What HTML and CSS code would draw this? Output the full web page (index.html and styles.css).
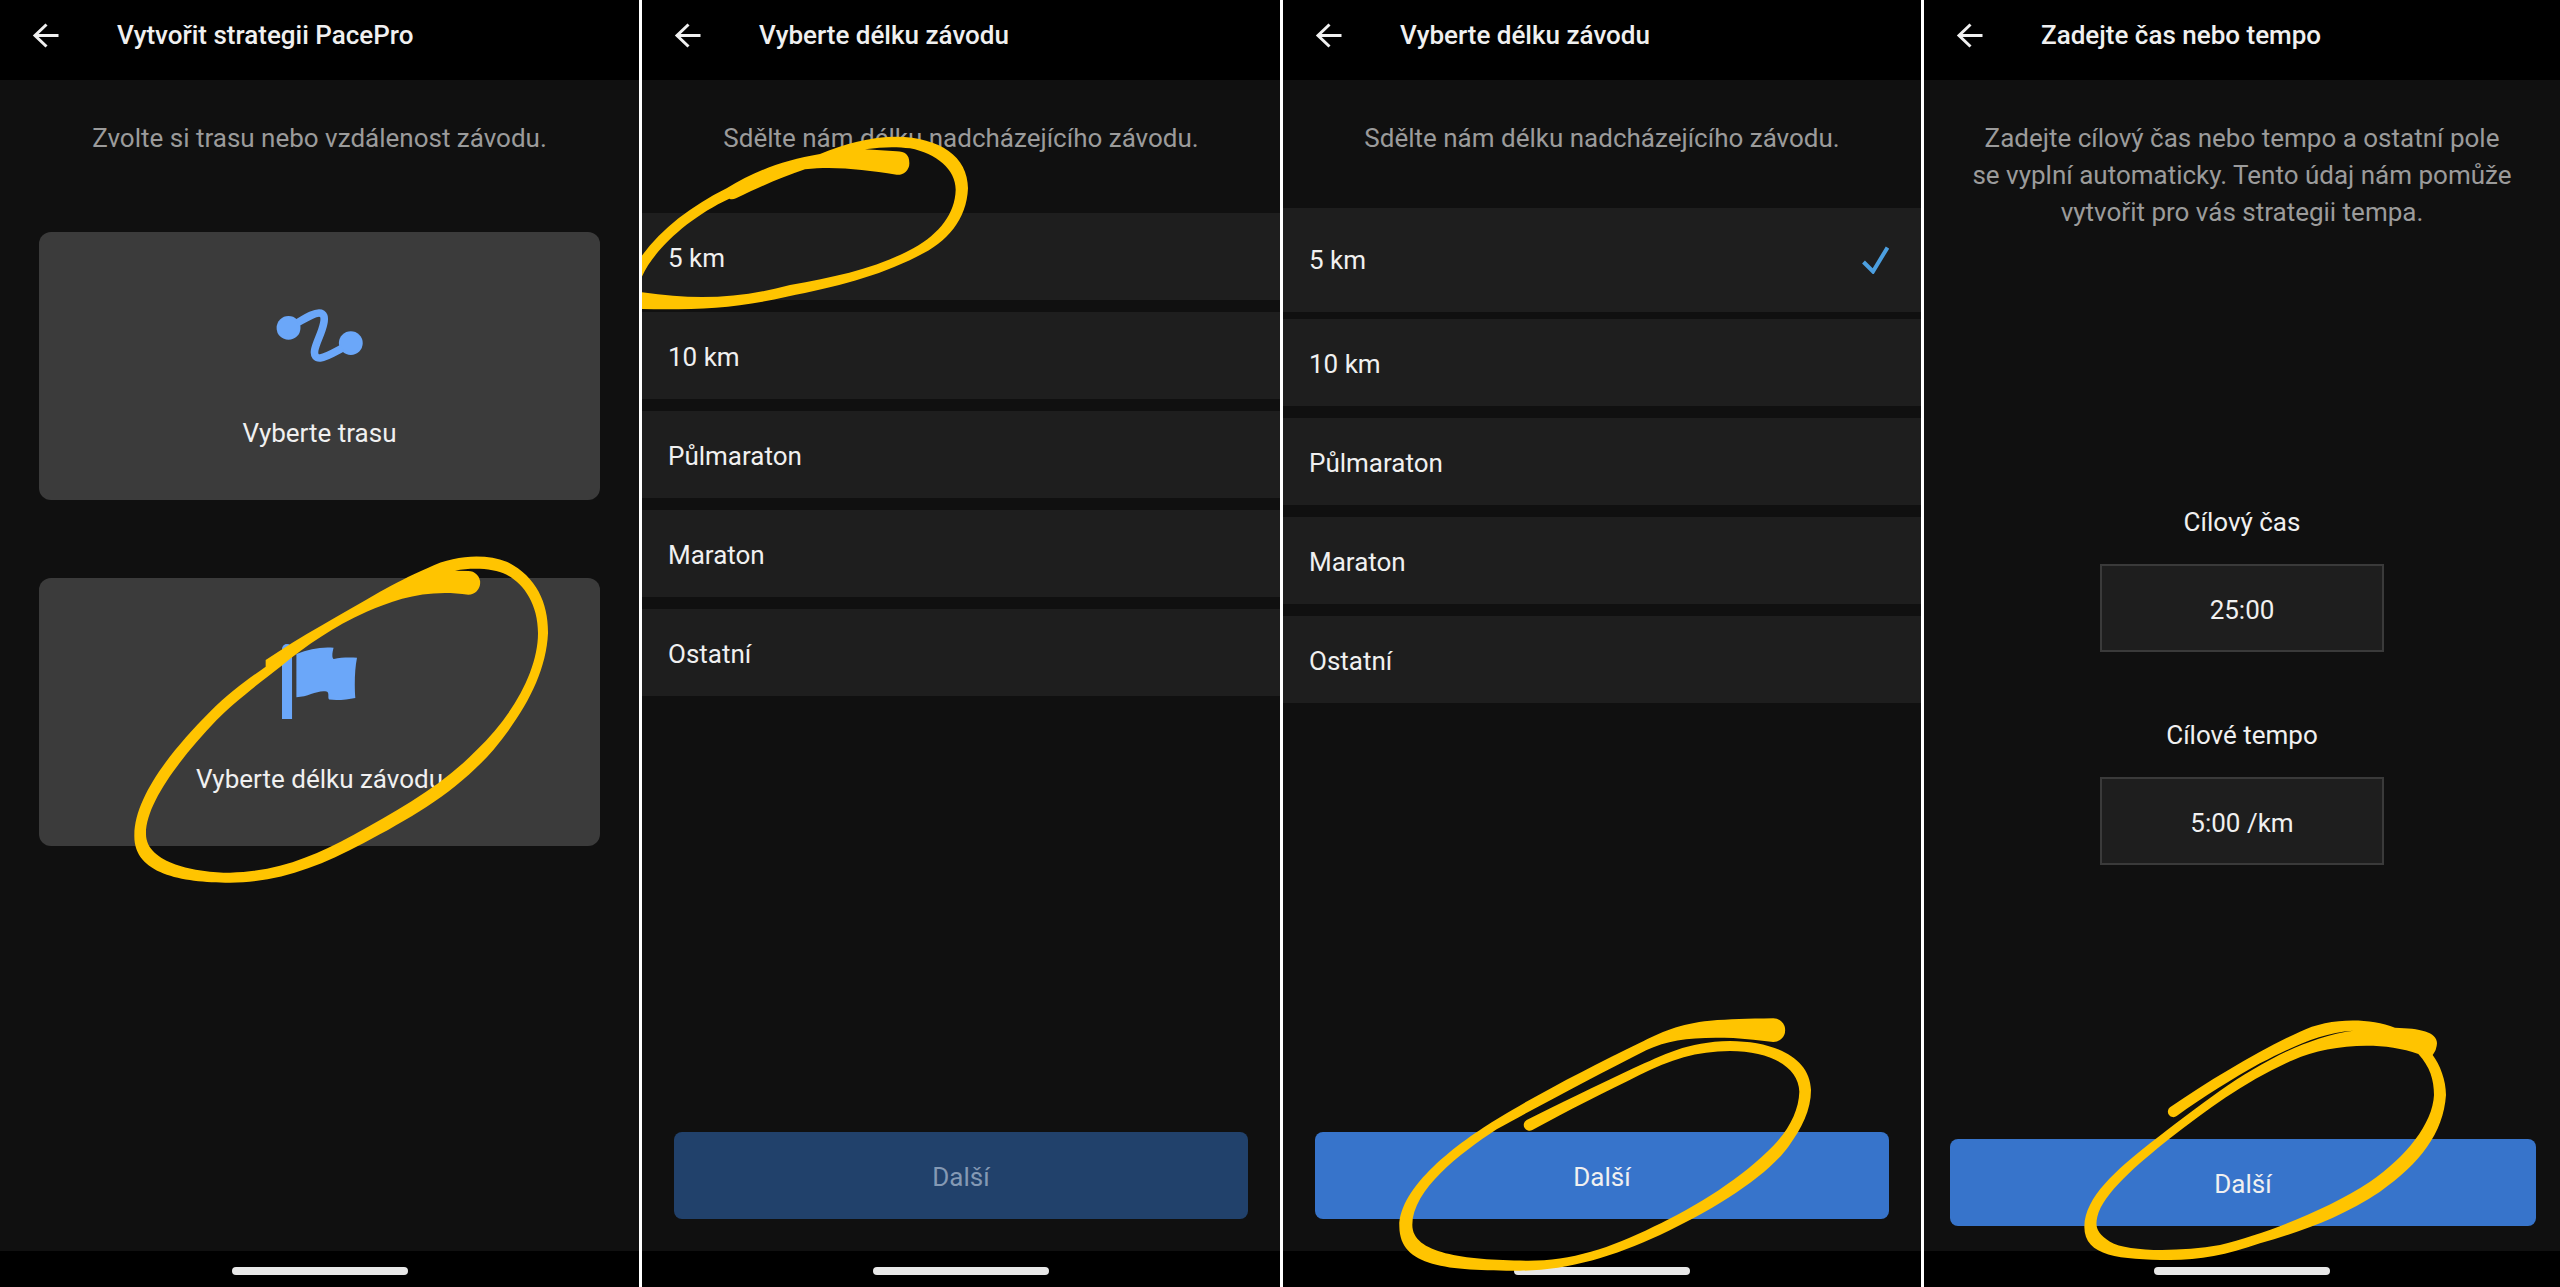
FILE: index.html
```html
<!DOCTYPE html>
<html lang="cs">
	<head>
		<meta charset="utf-8"/>
		<title>PacePro</title>
		<link rel="stylesheet" href="styles.css">
	</head>
	<body>
		<main class="screens">
			<section class="screen">
				<header>
					<button class="back" aria-label="Zpět"><svg viewBox="0 0 26 25"><path d="M14 1.5L2.5 12.5L14 23.5M2.5 12.5H26"/></svg></button>
					<h1>Vytvořit strategii PacePro</h1>
				</header>
				<p class="intro">Zvolte si trasu nebo vzdálenost závodu.</p>
				<div class="cards">
					<button class="card">
						<span class="card-icon">
							<svg class="route" viewBox="107 54 261 160">
								<circle cx="144" cy="111" r="36"/>
								<circle cx="332" cy="157" r="36"/>
								<path d="M170 96C205 76 222 66 236 66C252 66 254 80 250 98C244 128 228 152 223 178C220 196 228 203 240 202C256 200 280 186 306 172"/>
							</svg>
						</span>
						<span>Vyberte trasu</span>
					</button>
					<button class="card">
						<span class="card-icon">
							<svg class="flag" viewBox="545 375 224 224">
								<path d="M545 599V390A15 15 0 0 1 575 390V599Z"/>
								<path d="M588 405C625 390 660 383 699 386C695 400 693 419 700 420C720 415 745 415 769 416C762 450 761 500 764 536C740 541 710 544 686 541C680 536 688 520 678 517C650 512 625 533 588 534Z"/>
							</svg>
						</span>
						<span>Vyberte délku závodu</span>
					</button>
				</div>
				<div class="home-bar"><span></span></div>
				<svg class="ring ring-card" viewBox="0 0 1500 1200">
					<path d="M497 420C600 350 720 285 840 215C880 193 930 166 985 143C1070 102 1160 102 1220 125C1310 170 1345 250 1344 340C1338 460 1275 575 1180 690C1070 815 940 890 790 970C650 1044 530 1088 390 1088C240 1088 100 1060 103 945C104 830 215 690 330 575C390 515 440 480 497 440ZM545 437C470 495 400 550 350 600C240 715 138 850 138 940C136 1030 290 1058 390 1058C530 1055 640 1010 760 945C890 873 1030 795 1130 690C1240 585 1314 450 1314 340C1314 250 1270 190 1220 164C1180 145 1120 142 1065 152L1105 153A35 35 0 0 1 1105 224C980 205 880 240 800 275C700 320 620 375 545 437Z"/>
				</svg>
			</section>

			<section class="screen">
				<header>
					<button class="back" aria-label="Zpět"><svg viewBox="0 0 26 25"><path d="M14 1.5L2.5 12.5L14 23.5M2.5 12.5H26"/></svg></button>
					<h1>Vyberte délku závodu</h1>
				</header>
				<p class="intro">Sdělte nám délku nadcházejícího závodu.</p>
				<ul class="distances">
					<li><button>5 km</button></li>
					<li><button>10 km</button></li>
					<li><button>Půlmaraton</button></li>
					<li><button>Maraton</button></li>
					<li><button>Ostatní</button></li>
				</ul>
				<button class="next" disabled>Další</button>
				<div class="home-bar"><span></span></div>
				<svg class="ring ring-item" viewBox="0 0 1080 660">
					<path d="M30 445C90 360 180 290 290 235C370 185 460 150 570 132C640 103 720 80 800 80C930 82 1014 140 1014 235C1010 330 950 400 860 440C740 500 620 530 470 560C320 595 200 600 30 597ZM30 514C60 430 170 325 298 266Q306 270 318 265C400 225 460 200 525 178C620 168 700 180 800 194A34 34 0 0 0 838 158C838 135 825 124 800 124L705 118C760 110 800 110 840 115C920 130 978 180 977 240C975 310 930 370 850 415C740 475 620 500 480 525C330 565 200 572 30 546Z"/>
				</svg>
			</section>

			<section class="screen">
				<header>
					<button class="back" aria-label="Zpět"><svg viewBox="0 0 26 25"><path d="M14 1.5L2.5 12.5L14 23.5M2.5 12.5H26"/></svg></button>
					<h1>Vyberte délku závodu</h1>
				</header>
				<p class="intro">Sdělte nám délku nadcházejícího závodu.</p>
				<ul class="distances picked">
					<li><button class="active" aria-pressed="true">5 km<svg class="check" viewBox="0 0 27 28"><path d="M1.5 16L11 25.5L25.5 1.5"/></svg></button></li>
					<li><button>10 km</button></li>
					<li><button>Půlmaraton</button></li>
					<li><button>Maraton</button></li>
					<li><button>Ostatní</button></li>
				</ul>
				<button class="next">Další</button>
				<div class="home-bar"><span></span></div>
				<svg class="ring ring-next" viewBox="0 0 1380 861">
					<path d="M1180 55C1100 56 1050 58 990 62C900 70 840 98 780 128C640 196 480 278 360 352C230 430 58 560 58 680C60 800 200 812 420 812C560 812 700 770 840 705C1000 630 1160 530 1225 440C1265 385 1293 330 1293 270C1290 170 1180 124 1050 123C920 125 850 165 760 205C640 262 540 310 440 360A16 16 0 0 0 457 390C560 333 680 274 780 224C870 180 950 153 1050 153C1170 153 1256 200 1258 275C1256 330 1230 385 1180 437C1090 530 950 620 820 680C690 745 570 783 440 782C250 780 97 760 97 675C97 570 240 460 350 388C480 316 650 226 800 150C870 118 940 110 1060 114C1100 117 1140 122 1180 126A35 35 0 0 0 1180 55Z"/>
				</svg>
			</section>

			<section class="screen">
				<header>
					<button class="back" aria-label="Zpět"><svg viewBox="0 0 26 25"><path d="M14 1.5L2.5 12.5L14 23.5M2.5 12.5H26"/></svg></button>
					<h1>Zadejte čas nebo tempo</h1>
				</header>
				<p class="intro">Zadejte cílový čas nebo tempo a ostatní pole se vyplní automaticky. Tento údaj nám pomůže vytvořit pro vás strategii tempa.</p>
				<form class="goal">
					<div class="field">
						<label for="time">Cílový čas</label>
						<input type="text" id="time" value="25:00"/>
					</div>
					<div class="field">
						<label for="pace">Cílové tempo</label>
						<input type="text" id="pace" value="5:00 /km"/>
					</div>
				</form>
				<button class="next wide">Další</button>
				<div class="home-bar"><span></span></div>
				<svg class="ring ring-last" viewBox="0 0 1500 861">
					<path d="M330 322C450 240 600 150 720 95C800 55 920 50 1005 83C1080 85 1131 95 1131 130Q1130 150 1118 165C1140 195 1158 240 1158 285C1150 400 1080 490 960 575C840 655 720 695 600 730C500 765 420 780 330 780C180 778 73 770 73 680C75 590 170 510 270 430C330 382 420 315 480 272C600 190 740 110 880 92C780 98 700 140 600 190C520 235 430 290 350 348A16 16 0 0 1 330 322ZM1075 162C1110 200 1122 240 1122 285C1118 370 1040 470 930 545C800 630 620 700 480 735C350 757 200 755 150 725C110 700 105 680 112 650C130 580 230 495 330 415C440 330 560 240 700 180C800 135 960 120 1075 162Z"/>
				</svg>
			</section>
		</main>
	</body>
</html>
```
FILE: styles.css
```css
*{margin:0;padding:0;box-sizing:border-box;list-style-type:none;}
body
{
	background:#fff;
	color:#f0f0f0;
	font:26px/37px Roboto,"Liberation Sans",sans-serif;
}
button,input
{
	border:none;
	font:inherit;
	color:inherit;
}
button{cursor:pointer;}
.screens
{
	display:grid;
	grid-template-columns:639fr 638fr 638fr 636fr;
	gap:3px;
	min-height:100vh;
}
.screen
{
	position:relative;
	overflow:hidden;
	display:flex;
	flex-direction:column;
	background:#101010;
}
header
{
	height:80px;
	padding:0 32px 10px;
	display:flex;
	align-items:center;
	gap:58px;
	background:#000;
}
header h1
{
	font-size:26px;
	font-weight:500;
}
.back
{
	display:flex;
	background:none;
}
.back svg
{
	width:27px;
	height:25px;
	fill:none;
	stroke:#f0f0f0;
	stroke-width:3;
}
.intro
{
	padding:40px 45px 0;
	text-align:center;
	color:#9b9b9b;
}
.cards
{
	margin:75px 39px 0;
	display:flex;
	flex-direction:column;
	gap:78px;
}
.card
{
	height:268px;
	padding-top:66px;
	display:flex;
	flex-direction:column;
	align-items:center;
	justify-content:flex-start;
	gap:42px;
	border-radius:12px;
	background:#3b3b3b;
}
.card-icon
{
	height:75px;
	display:flex;
	align-items:center;
	fill:#6ba7f9;
}
.route
{
	width:87px;
	height:53px;
}
.route path
{
	fill:none;
	stroke:#6ba7f9;
	stroke-width:23;
}
.flag
{
	width:75px;
	height:75px;
}
.distances
{
	margin-top:56px;
	display:flex;
	flex-direction:column;
	gap:12px;
}
.distances button
{
	width:100%;
	height:87px;
	padding:3px 32px 0 26px;
	display:flex;
	align-items:center;
	justify-content:space-between;
	background:#1e1e1e;
}
.picked{margin-top:51px;}
.picked li:first-child{margin-bottom:-5px;}
.distances .active
{
	height:104px;
	padding-top:0;
}
.check
{
	width:27px;
	height:28px;
	fill:none;
	stroke:#4c9fe0;
	stroke-width:4;
}
.goal
{
	margin-top:273px;
	display:flex;
	flex-direction:column;
	align-items:center;
	gap:65px;
}
.field
{
	width:284px;
	display:flex;
	flex-direction:column;
	gap:23px;
	text-align:center;
}
.field input
{
	width:100%;
	height:88px;
	padding-top:3px;
	border:2px solid #3a3a3a;
	text-align:center;
	background:#1e1e1e;
}
.next
{
	height:87px;
	margin:auto 32px 32px;
	padding-top:3px;
	border-radius:8px;
	background:#3774cb;
}
.next:disabled
{
	color:#8499b4;
	background:#21416b;
}
.wide{margin:auto 24px 25px 26px;}
.home-bar
{
	height:36px;
	padding-top:16px;
	display:flex;
	justify-content:center;
	background:#000;
}
.screen > .home-bar:nth-child(4){margin-top:auto;}
.home-bar span
{
	width:176px;
	height:8px;
	border-radius:4px;
	background:#e8e8e8;
}
/* hand-drawn marks lying over the screens */
.ring
{
	position:absolute;
	fill:#ffc400;
	fill-rule:evenodd;
	pointer-events:none;
}
.ring-card
{
	width:500px;
	height:400px;
	left:100px;
	top:520px;
}
.ring-item
{
	width:360px;
	height:220px;
	left:-12px;
	top:110px;
}
.ring-next
{
	width:460px;
	height:287px;
	left:97px;
	bottom:0;
}
.ring-last
{
	width:500px;
	height:287px;
	left:136px;
	bottom:0;
}
```
